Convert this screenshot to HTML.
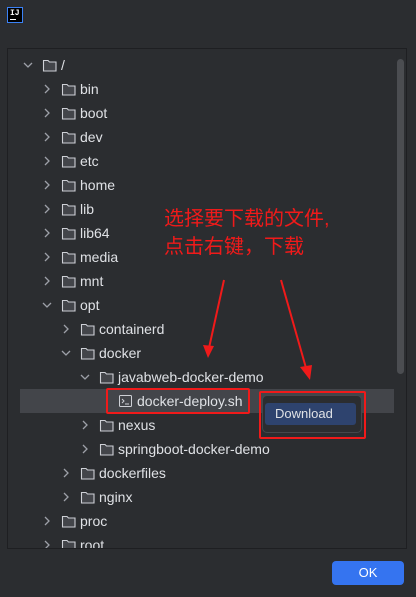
<!DOCTYPE html>
<html><head><meta charset="utf-8"><style>
body{margin:0;width:416px;height:597px;background:#2b2d30;position:relative;overflow:hidden;font-family:"Liberation Sans","Noto Sans CJK SC",sans-serif;}
.logo{position:absolute;left:7px;top:7px;width:16px;height:16px;border:1px solid #3b82f6;background:#000;box-sizing:border-box;color:#fff;font:bold 8px "Liberation Mono",monospace;line-height:9px;padding:1px 0 0 2px}
.panel{position:absolute;left:7px;top:48px;width:400px;height:501px;border:1px solid #1e1f22;box-sizing:border-box;background:#2b2d30;overflow:hidden}
.row{position:absolute;left:0;height:24px;width:100%;color:#dfe1e5;font-size:14px;line-height:24px}
.row svg{position:absolute;top:5px}
.sel{position:absolute;left:12px;top:340px;width:374px;height:24px;background:#43454a}
.sb{position:absolute;left:389px;top:10px;width:7px;height:315px;background:#4b4d51;border-radius:4px}
.ok{position:absolute;left:332px;top:561px;width:72px;height:24px;background:#3574f0;border-radius:4px;color:#fff;font-size:13px;text-align:center;line-height:24px}
.note{position:absolute;left:164px;top:205px;color:#f01a1a;font-size:20px;line-height:28px}
.box{position:absolute;border:2px solid #f01a1a;border-radius:2px;box-sizing:border-box}
.menu{position:absolute;left:262px;top:395px;width:100px;height:38px;background:#2b2d30;border:1px solid #45474b;border-radius:5px;box-sizing:border-box}
.dl{position:absolute;left:265px;top:403px;width:91px;height:22px;background:#2e436e;border-radius:3px;color:#dfe1e5;font-size:13px;line-height:22px;padding-left:10px;box-sizing:border-box}
</style></head><body>
<div class="logo">IJ<div style="width:6px;height:1px;background:#fff;margin-top:1px"></div></div>
<div class="panel">
<div class="sel"></div>
<div class="sb"></div>
<div id="t"></div>
</div>
<script>
var rows=[[0,'/',1],[1,'bin',0],[1,'boot',0],[1,'dev',0],[1,'etc',0],[1,'home',0],[1,'lib',0],[1,'lib64',0],[1,'media',0],[1,'mnt',0],[1,'opt',1],[2,'containerd',0],[2,'docker',1],[3,'javabweb-docker-demo',1],[4,'docker-deploy.sh',2],[3,'nexus',0],[3,'springboot-docker-demo',0],[2,'dockerfiles',0],[2,'nginx',0],[1,'proc',0],[1,'root',0]];
var h='';
rows.forEach(function(r,i){
 var top=4+24*i, x=14+19*r[0];
 var s='<div class="row" style="top:'+top+'px">';
 if(r[2]!=2){
  if(r[2]==1) s+='<svg style="left:'+x+'px" width="12" height="14"><path d="M2 5l4 4 4-4" stroke="#9da0a8" stroke-width="1.3" fill="none"/></svg>';
  else s+='<svg style="left:'+x+'px" width="12" height="14"><path d="M4 3l4 4-4 4" stroke="#9da0a8" stroke-width="1.3" fill="none"/></svg>';
  s+='<svg style="left:'+(x+20)+'px" width="16" height="15"><path d="M1.5 2.5h4.5l1.5 1.5h6.5v9h-12.5z" stroke="#ced0d6" stroke-width="1.1" fill="#43454a"/></svg>';
 } else {
  s+='<svg style="left:'+(x+20)+'px" width="16" height="15"><rect x="1.5" y="1.5" width="12" height="11" rx="1" stroke="#ced0d6" fill="none"/><path d="M4 5l2 2-2 2M7 10h4" stroke="#ced0d6" fill="none"/></svg>';
 }
 s+='<span style="position:absolute;left:'+(x+39)+'px">'+r[1]+'</span></div>';
 h+=s;
});
document.getElementById('t').innerHTML=h;
</script>
<div class="note">选择要下载的文件,<br>点击右键，下载</div>
<svg style="position:absolute;left:0;top:0" width="416" height="597">
<path d="M224 280L209 348" stroke="#f01a1a" stroke-width="2"/><path d="M203 345l5 13 6-12z" fill="#f01a1a"/>
<path d="M281 280L306 368" stroke="#f01a1a" stroke-width="2"/><path d="M300 367l10 13 2-15z" fill="#f01a1a"/>
</svg>
<div class="box" style="left:106px;top:388px;width:144px;height:26px"></div>
<div class="menu"></div>
<div class="dl">Download</div>
<div class="box" style="left:259px;top:391px;width:107px;height:48px"></div>
<div class="ok">OK</div>
</body></html>
